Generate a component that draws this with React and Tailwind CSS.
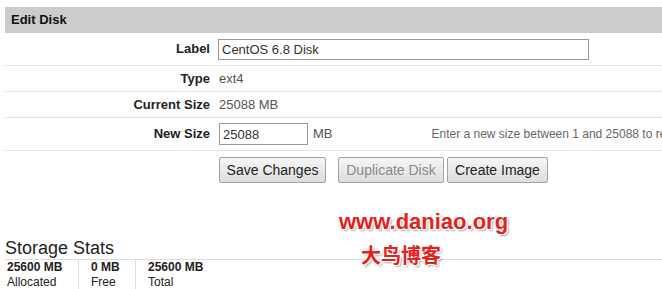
export default function App() {
  const font = { fontFamily: '"Liberation Sans", Arial, sans-serif' };
  const btn =
    "h-[26px] border border-[#a3a3a3] rounded-[2px] bg-gradient-to-b from-[#f6f6f6] to-[#dddddd] text-[14px] leading-none flex items-center justify-center whitespace-nowrap";
  return (
    <div className="w-[662px] h-[289px] bg-white overflow-hidden relative" style={font}>
      <div className="pt-[7px] pl-[5px]">
        <div className="h-[26px] bg-[#cccccc] flex items-center pl-[6px] text-[13px] font-bold text-[#111]">
          Edit Disk
        </div>
        <div className="h-[33px] border-b border-[#e4e4e4] flex items-center">
          <div className="w-[205px] text-right text-[13px] font-bold text-[#222]">Label</div>
          <input
            className="ml-[8px] w-[371px] h-[21px] border border-[#9a9a9a] px-[3px] text-[13px] text-[#333] outline-none"
            defaultValue="CentOS 6.8 Disk"
            style={font}
          />
        </div>
        <div className="h-[26px] border-b border-[#e4e4e4] flex items-center">
          <div className="w-[205px] text-right text-[13px] font-bold text-[#222]">Type</div>
          <div className="ml-[9px] text-[13px] text-[#555]">ext4</div>
        </div>
        <div className="h-[26px] border-b border-[#e4e4e4] flex items-center">
          <div className="w-[205px] text-right text-[13px] font-bold text-[#222]">Current Size</div>
          <div className="ml-[9px] text-[13px] text-[#555]">25088 MB</div>
        </div>
        <div className="h-[33px] border-b border-[#e4e4e4] flex items-center whitespace-nowrap overflow-hidden">
          <div className="w-[205px] shrink-0 text-right text-[13px] font-bold text-[#222]">New Size</div>
          <input
            className="ml-[9px] w-[89px] h-[22px] shrink-0 border border-[#9a9a9a] px-[3px] text-[13px] text-[#333] outline-none"
            defaultValue="25088"
            style={font}
          />
          <div className="ml-[5px] text-[13px] text-[#555] shrink-0">MB</div>
          <div className="ml-[99px] text-[12px] text-[#666] shrink-0">
            Enter a new size between 1 and 25088 to resize the disk.
          </div>
        </div>
        <div className="flex pt-[6px] pl-[214px]">
          <button className={btn + " w-[107px] text-[#222]"} style={font}>Save Changes</button>
          <button className={btn + " w-[106px] ml-[12px] text-[#8a8a8a]"} style={font}>Duplicate Disk</button>
          <button className={btn + " w-[101px] ml-[3px] text-[#222]"} style={font}>Create Image</button>
        </div>
        <div className="mt-[55px] h-[22px] border-b border-[#dcdcdc] text-[18px] leading-[21px] text-[#222]">
          Storage Stats
        </div>
        <div className="flex text-[12px] text-[#222]">
          <div className="w-[74px] pl-[2px] border-r border-[#dcdcdc] h-[30px]">
            <div className="font-bold leading-[14px]">25600 MB</div>
            <div className="leading-[14px] mt-[1px]">Allocated</div>
          </div>
          <div className="w-[57px] pl-[12px] border-r border-[#dcdcdc] h-[30px]">
            <div className="font-bold leading-[14px]">0 MB</div>
            <div className="leading-[14px] mt-[1px]">Free</div>
          </div>
          <div className="pl-[12px]">
            <div className="font-bold leading-[14px]">25600 MB</div>
            <div className="leading-[14px] mt-[1px]">Total</div>
          </div>
        </div>
      </div>
      <div
        className="absolute left-[339px] top-[209px] text-[22px] font-bold text-[#e3211d] leading-[26px]"
        style={{
          fontFamily: '"Liberation Sans", Arial, sans-serif',
          textShadow:
            "1px 0 0 #fff, -1px 0 0 #fff, 0 1px 0 #fff, 0 -1px 0 #fff, 1px 1px 0 #fff, -1px -1px 0 #fff, 1px -1px 0 #fff, -1px 1px 0 #fff, 2px 2px 2px rgba(0,0,0,0.35)",
        }}
      >
        www.daniao.org
      </div>
      <div
        className="absolute left-[361px] top-[242px] text-[20px] font-bold text-[#e3211d] leading-[26px]"
        style={{
          fontFamily: '"Noto Sans CJK SC", sans-serif',
          textShadow:
            "1px 0 0 #fff, -1px 0 0 #fff, 0 1px 0 #fff, 0 -1px 0 #fff, 1px 1px 0 #fff, -1px -1px 0 #fff, 1px -1px 0 #fff, -1px 1px 0 #fff, 2px 2px 2px rgba(0,0,0,0.35)",
        }}
      >
        大鸟博客
      </div>
    </div>
  );
}
